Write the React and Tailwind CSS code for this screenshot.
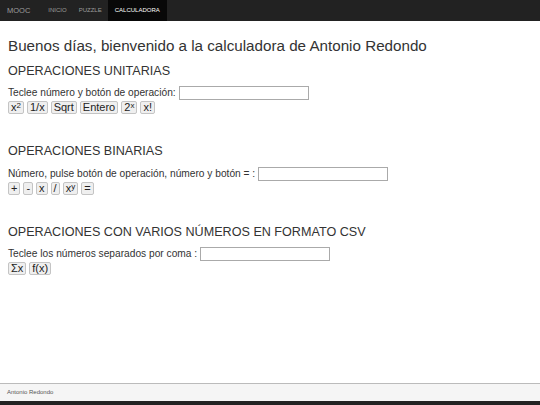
import React from "react";

const font = { fontFamily: '"Liberation Sans", Arial, sans-serif' };

function Btn({ children }) {
  return (
    <button className="h-[13px] px-[2px] bg-[#efefef] border border-[#c4c4c4] rounded-[2px] text-[11px] leading-[11px] text-[#222] flex items-center">
      {children}
    </button>
  );
}

function Sup({ children }) {
  return <span className="text-[8px] leading-[8px] self-start">{children}</span>;
}

function Row({ label }) {
  return (
    <div className="flex items-center h-[14px] text-[10.2px] text-[#333]">
      <span>{label}</span>
      <input className="ml-[3px] w-[130px] h-[14px] border border-[#aaa] bg-white" />
    </div>
  );
}

const App = () => {
  return (
    <div style={font} className="min-h-[405px] flex flex-col bg-white">
      <nav className="h-[21px] bg-[#222] flex items-stretch">
        <span className="px-[7px] flex items-center text-[7.5px] text-[#9d9d9d]">MOOC</span>
        <span className="ml-[5px] px-[6px] flex items-center text-[6px] text-[#9d9d9d]">INICIO</span>
        <span className="px-[6px] flex items-center text-[6px] text-[#9d9d9d]">PUZZLE</span>
        <span className="px-[7px] flex items-center text-[6px] text-white bg-[#080808]">CALCULADORA</span>
      </nav>

      <main className="px-[8px] pt-[16px]">
        <h1 className="text-[15.2px] leading-[18px] text-[#333]">
          Buenos días, bienvenido a la calculadora de Antonio Redondo
        </h1>

        <h2 className="mt-[9px] text-[12.6px] leading-[15px] text-[#333]">OPERACIONES UNITARIAS</h2>
        <div className="mt-[7px]">
          <Row label="Teclee número y botón de operación:" />
          <div className="flex gap-[3px] mt-[1px]">
            <Btn>x<Sup>2</Sup></Btn>
            <Btn>1/x</Btn>
            <Btn>Sqrt</Btn>
            <Btn>Entero</Btn>
            <Btn>2<Sup>x</Sup></Btn>
            <Btn>x!</Btn>
          </div>
        </div>

        <h2 className="mt-[30px] text-[12.6px] leading-[15px] text-[#333]">OPERACIONES BINARIAS</h2>
        <div className="mt-[8px]">
          <Row label="Número, pulse botón de operación, número y botón = :" />
          <div className="flex gap-[3px] mt-[1px]">
            <Btn>+</Btn>
            <Btn>-</Btn>
            <Btn>x</Btn>
            <Btn>/</Btn>
            <Btn>x<Sup>y</Sup></Btn>
            <Btn>=</Btn>
          </div>
        </div>

        <h2 className="mt-[30px] text-[12.6px] leading-[15px] text-[#333]">
          OPERACIONES CON VARIOS NÚMEROS EN FORMATO CSV
        </h2>
        <div className="mt-[7px]">
          <Row label="Teclee los números separados por coma :" />
          <div className="flex gap-[3px] mt-[1px]">
            <Btn>Σx</Btn>
            <Btn>f(x)</Btn>
          </div>
        </div>
      </main>

      <footer className="mt-auto">
        <div className="h-[18px] border-t border-[#bbb] bg-[#f5f5f5] flex items-center px-[7px] text-[6px] text-[#555]">
          Antonio Redondo
        </div>
        <div className="h-[4px] bg-[#222]" />
      </footer>
    </div>
  );
};

export default App;
